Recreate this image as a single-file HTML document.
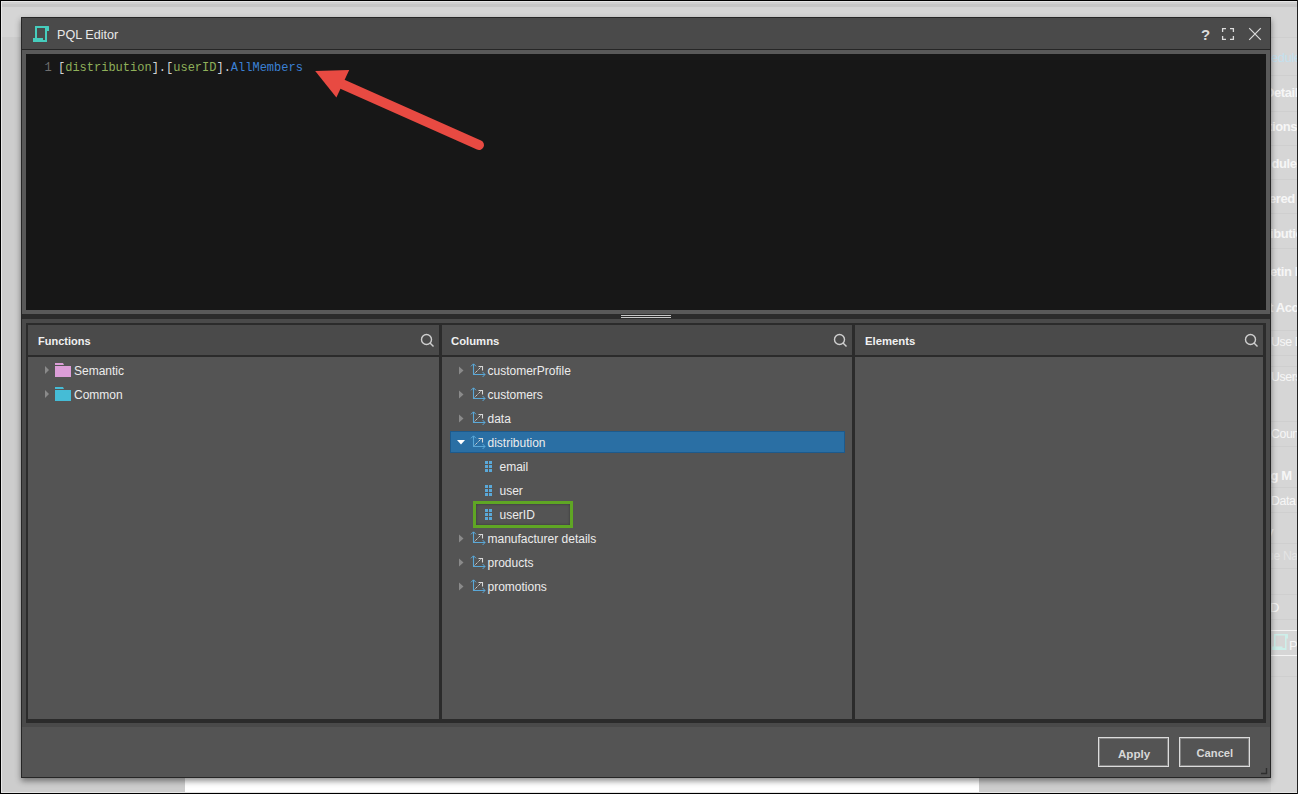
<!DOCTYPE html>
<html><head><meta charset="utf-8">
<style>
*{box-sizing:border-box;margin:0;padding:0}
html,body{width:1298px;height:794px;overflow:hidden}
body{position:relative;background:#d6d6d6;font-family:"Liberation Sans",sans-serif}
.a{position:absolute}
.t{position:absolute;white-space:nowrap;line-height:1}
.hd{position:absolute;white-space:nowrap;line-height:1;font-weight:bold;font-size:11.3px;color:#f0f0f0}
.it{position:absolute;white-space:nowrap;line-height:1;font-size:12px;color:#ececec}
.code{position:absolute;white-space:nowrap;line-height:1;font-family:"Liberation Mono",monospace;font-size:12px;color:#d4d4d4}
.bg{position:absolute;white-space:nowrap;line-height:1;font-size:13px;color:#f6f6f6;letter-spacing:-0.4px}
.sep{position:absolute;left:1271px;width:26px;height:1px;background:#cfcfcf}
</style></head><body>
<!-- background -->
<div class="a" style="left:0;top:0;width:1298px;height:37px;background:#d5d5d5"></div>
<div class="a" style="left:0;top:37px;width:1271px;height:757px;background:#cdcdcd"></div>
<div class="a" style="left:1271px;top:37px;width:27px;height:757px;background:#d6d6d6"></div>
<div class="a" style="left:185px;top:777px;width:794px;height:16px;background:#fff"></div>
<!-- right strip content -->
<div class="sep" style="top:37px"></div>
<div class="sep" style="top:75px"></div>
<div class="sep" style="top:111px"></div>
<div class="sep" style="top:145px"></div>
<div class="sep" style="top:179px"></div>
<div class="sep" style="top:213px"></div>
<div class="sep" style="top:248px"></div>
<div class="sep" style="top:330px"></div>
<div class="sep" style="top:355px"></div>
<div class="sep" style="top:366px"></div>
<div class="sep" style="top:421px"></div>
<div class="sep" style="top:446px"></div>
<div class="sep" style="top:487px"></div>
<div class="sep" style="top:512px"></div>
<div class="sep" style="top:543px"></div>
<div class="sep" style="top:568px"></div>
<div class="sep" style="top:594px"></div>
<div class="sep" style="top:619px"></div>
<div class="sep" style="top:630px;background:#f4f4f4"></div>
<div class="sep" style="top:655px;background:#f4f4f4"></div>
<div class="sep" style="top:676px"></div>
<div class="bg" style="top:51px;left:1271px;color:#c4e0ee">edule</div>
<div class="bg" style="top:85.5px;left:1265px;font-weight:bold">Detail</div>
<div class="bg" style="top:120px;left:1268px;font-weight:bold">tions</div>
<div class="bg" style="top:156.5px;left:1271.5px;font-weight:bold">dule</div>
<div class="bg" style="top:191.5px;left:1269px;font-weight:bold">ered</div>
<div class="bg" style="top:227px;left:1270px;font-weight:bold">ibutio</div>
<div class="bg" style="top:264.5px;left:1270px;font-weight:bold">etin I</div>
<div class="bg" style="top:300.5px;left:1269px;font-weight:bold">t Acc</div>
<div class="bg" style="font-size:12.3px;top:335.5px;left:1271px">Use D</div>
<div class="bg" style="font-size:12.3px;top:371px;left:1271px">Users</div>
<div class="bg" style="font-size:12.3px;top:428px;left:1271px">Coun</div>
<div class="bg" style="top:469px;left:1263px;font-weight:bold">ng M</div>
<div class="bg" style="font-size:12.3px;top:494.5px;left:1271px">Data</div>
<div class="bg" style="top:525px;left:1267px">y</div>
<div class="bg" style="font-size:12.3px;top:550px;left:1267px;color:#e4e4e4">ue Na</div>
<div class="bg" style="top:600.5px;left:1270px">D</div>
<div class="bg" style="top:638.5px;left:1289px">Po</div>
<svg class="a" style="left:1272px;top:634px" width="16" height="16"><path fill="#cdefea" d="M2 0H15.5Q16 0 16 .5V4.5H14.5V16H0V12.5H2ZM3.5 1.5V12.5H10.5V14H13V1.5Z"/></svg>
<div class="a" style="left:0;top:1px;width:1298px;height:1px;background:#e6e6e6"></div>
<div class="a" style="left:0;top:2px;width:1298px;height:2px;background:#d0d0d0"></div>
<div class="a" style="left:0;top:4px;width:1298px;height:3px;background:#c7c7c7"></div>
<div class="a" style="left:1px;top:1px;width:1px;height:792px;background:#e8e8e8"></div>
<div class="a" style="left:1px;top:792px;width:1296px;height:1px;background:#e4e4e4"></div>
<div class="a" style="left:0;top:0;width:1298px;height:1px;background:#000"></div>
<div class="a" style="left:0;top:793px;width:1298px;height:1px;background:#000"></div>
<div class="a" style="left:0;top:0;width:1px;height:794px;background:#000"></div>
<div class="a" style="left:1297px;top:0;width:1px;height:794px;background:#222"></div>

<!-- dialog -->
<div class="a" id="dlg" style="left:21px;top:17px;width:1250px;height:761px;background:#545454;border:1px solid #262626;box-shadow:0 3px 6px rgba(0,0,0,.45)"></div>
<!-- title bar -->
<div class="a" style="left:22px;top:18px;width:1248px;height:31px;background:#4a4a4a"></div>
<div class="a" style="left:22px;top:49px;width:1248px;height:1px;background:#262626"></div>
<svg class="a" style="left:33px;top:26px" width="16" height="16"><path fill="#46cdbd" d="M2 0H15.5Q16 0 16 .5V5H14V16H0V12H2ZM4 2V12H10V14H12V2Z"/></svg>
<div class="t" style="left:57px;top:29px;font-size:12.6px;color:#e8e8e8">PQL Editor</div>
<div class="t" style="left:1201px;top:27px;font-size:15px;font-weight:bold;color:#dcdcdc">?</div>
<svg class="a" style="left:1221px;top:27px" width="14" height="14" fill="none" stroke="#dcdcdc" stroke-width="1.3"><path d="M1.6 5V1.6H5M9 1.6H12.4V5M12.4 9V12.4H9M5 12.4H1.6V9"/></svg>
<svg class="a" style="left:1248px;top:27px" width="14" height="14" fill="none" stroke="#dcdcdc" stroke-width="1.2"><path d="M1.2 1.2L12.8 12.8M12.8 1.2L1.2 12.8"/></svg>

<!-- editor -->
<div class="a" style="left:22px;top:50px;width:1248px;height:264px;background:#595959"></div>
<div class="a" style="left:26px;top:54px;width:1240px;height:256px;background:#171717"></div>
<div class="code" style="left:44.5px;top:61.5px;color:#6e6e6e">1</div>
<div class="code" style="left:58px;top:61.5px">[<span style="color:#8fb05a">distribution</span>].[<span style="color:#8fb05a">userID</span>].<span style="color:#3b80d4">AllMembers</span></div>
<svg class="a" style="left:0;top:0" width="600" height="200">
 <line x1="343" y1="84.5" x2="479" y2="145" stroke="#e84a42" stroke-width="10" stroke-linecap="round"/>
 <polygon points="315.2,71 349.2,69.9 336.4,97.4" fill="#e84a42"/>
</svg>
<!-- splitter -->
<div class="a" style="left:22px;top:314px;width:1248px;height:5px;background:#2b2b2b"></div>
<div class="a" style="left:621px;top:315px;width:50px;height:1px;background:#c8c8c8"></div>
<div class="a" style="left:621px;top:317px;width:50px;height:1px;background:#c8c8c8"></div>
<div class="a" style="left:22px;top:319px;width:1248px;height:408px;background:#4a4a4a"></div>

<!-- panels -->
<div class="a" style="left:26px;top:323px;width:1240px;height:400px;background:#2b2b2b"></div>
<div class="a" style="left:28px;top:325px;width:411px;height:30px;background:#4a4a4a"></div>
<div class="a" style="left:28px;top:357px;width:411px;height:362px;background:#545454"></div>
<div class="a" style="left:442px;top:325px;width:410px;height:30px;background:#4a4a4a"></div>
<div class="a" style="left:442px;top:357px;width:410px;height:362px;background:#545454"></div>
<div class="a" style="left:855px;top:325px;width:408px;height:30px;background:#4a4a4a"></div>
<div class="a" style="left:855px;top:357px;width:408px;height:362px;background:#545454"></div>

<div class="hd" style="left:38px;top:335.5px;font-size:11px">Functions</div>
<div class="hd" style="left:451px;top:335.5px">Columns</div>
<div class="hd" style="left:865px;top:335.5px">Elements</div>
<svg class="a" style="left:420px;top:333px" width="15" height="15" fill="none" stroke="#cfcfcf" stroke-width="1.4"><circle cx="6.5" cy="6.5" r="5"/><path d="M10 10L13.5 13.5"/></svg>
<svg class="a" style="left:833px;top:333px" width="15" height="15" fill="none" stroke="#cfcfcf" stroke-width="1.4"><circle cx="6.5" cy="6.5" r="5"/><path d="M10 10L13.5 13.5"/></svg>
<svg class="a" style="left:1244px;top:333px" width="15" height="15" fill="none" stroke="#cfcfcf" stroke-width="1.4"><circle cx="6.5" cy="6.5" r="5"/><path d="M10 10L13.5 13.5"/></svg>

<!-- functions tree -->
<svg class="a" style="left:44px;top:362px" width="30" height="40">
 <polygon points="1,4 5,8 1,12" fill="#8a8a8a"/>
 <polygon points="1,28 5,32 1,36" fill="#8a8a8a"/>
 <path fill="#dc9ed8" d="M11 1H19L20 3H11ZM11 4H27V15H11Z"/>
 <path fill="#45bcd6" d="M11 25H19L20 27H11ZM11 28H27V39H11Z"/>
</svg>
<div class="it" style="left:74px;top:365px">Semantic</div>
<div class="it" style="left:74px;top:389px">Common</div>

<!-- columns tree -->
<div class="a" style="left:450px;top:431px;width:395px;height:22px;background:#2a6fa4;border:1px solid #1d5a8c"></div>
<svg class="a" style="left:456px;top:360px" width="34" height="240">
 <defs>
  <g id="ch">
   <path d="M17.5 4V14.5H29" stroke="#5aa8d8" stroke-width="1.1" fill="none"/>
   <path d="M15 6.3L17.5 3.8L20 6.3M26.6 12L29 14.5L26.6 17" stroke="#5aa8d8" stroke-width="1" fill="none"/>
   <path d="M18.6 13.4L25.6 6.4" stroke="#d4d4d4" stroke-width="1" fill="none" stroke-dasharray="1.4 .7"/>
   <path d="M22.5 6.5H26.5V10.5" stroke="#d8d8d8" stroke-width="1.1" fill="none"/>
  </g>
  <g id="gr" fill="#5aa8d8">
   <rect x="29" y="1" width="3" height="3"/><rect x="33" y="1" width="3" height="3"/>
   <rect x="29" y="5" width="3" height="3"/><rect x="33" y="5" width="3" height="3"/>
   <rect x="29" y="9" width="3" height="3"/><rect x="33" y="9" width="3" height="3"/>
  </g>
 </defs>
 <polygon points="3,6.5 7.5,10.5 3,14.5" fill="#8a8a8a"/>
 <use href="#ch" y="0"/>
 <polygon points="3,30.5 7.5,34.5 3,38.5" fill="#8a8a8a"/>
 <use href="#ch" y="24"/>
 <polygon points="3,54.5 7.5,58.5 3,62.5" fill="#8a8a8a"/>
 <use href="#ch" y="48"/>
 <polygon points="1,80 9,80 5,84.5" fill="#ffffff"/>
 <use href="#ch" y="72"/>
 <polygon points="3,174.5 7.5,178.5 3,182.5" fill="#8a8a8a"/>
 <use href="#ch" y="168"/>
 <polygon points="3,198.5 7.5,202.5 3,206.5" fill="#8a8a8a"/>
 <use href="#ch" y="192"/>
 <polygon points="3,222.5 7.5,226.5 3,230.5" fill="#8a8a8a"/>
 <use href="#ch" y="216"/>
</svg>
<svg class="a" style="left:456px;top:460px" width="40" height="64">
 <use href="#gr" y="0"/>
 <use href="#gr" y="24"/>
 <use href="#gr" y="48"/>
</svg>
<div class="it" style="left:487.5px;top:365px">customerProfile</div>
<div class="it" style="left:487.5px;top:389px">customers</div>
<div class="it" style="left:487.5px;top:413px">data</div>
<div class="it" style="left:487.5px;top:437px">distribution</div>
<div class="it" style="left:499.5px;top:461px">email</div>
<div class="it" style="left:499.5px;top:485px">user</div>
<div class="it" style="left:499.5px;top:509px">userID</div>
<div class="it" style="left:487.5px;top:533px">manufacturer details</div>
<div class="it" style="left:487.5px;top:557px">products</div>
<div class="it" style="left:487.5px;top:581px">promotions</div>
<div class="a" style="left:473px;top:501px;width:100px;height:27px;border:3px solid #5fa624;box-shadow:inset 0 0 3px rgba(0,0,0,.35)"></div>

<!-- footer -->
<div class="a" style="left:22px;top:727px;width:1248px;height:50px;background:#545454"></div>
<div class="a" style="left:1098px;top:737px;width:71px;height:30px;border:1px solid #dcdcdc;box-shadow:inset 0 0 0 1px rgba(220,220,220,.35)"></div>
<div class="a" style="left:1179px;top:737px;width:71px;height:30px;border:1px solid #dcdcdc;box-shadow:inset 0 0 0 1px rgba(220,220,220,.35)"></div>
<div class="t" style="left:1118px;top:747.7px;font-size:11.6px;font-weight:bold;color:#d8d8d8">Apply</div>
<div class="t" style="left:1196.5px;top:747.7px;font-size:11.2px;font-weight:bold;color:#d8d8d8">Cancel</div>
<svg class="a" style="left:1261px;top:768px" width="7" height="7" fill="none" stroke="#2e2e2e" stroke-width="1.4"><path d="M5.5 0V5.5H0"/></svg>
</body></html>
